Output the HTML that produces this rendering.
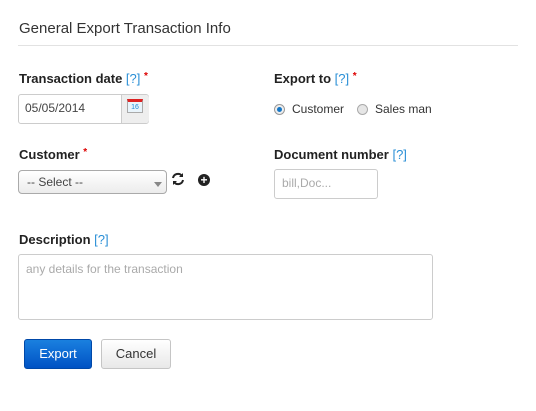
<!DOCTYPE html>
<html><head><style>
body{margin:0;width:536px;height:411px;background:#fff;font-family:"Liberation Sans",sans-serif;position:relative;overflow:hidden;color:#333}
.a{position:absolute}
.t{font-size:15px;color:#333}
.lbl{font-size:13px;font-weight:bold;color:#222}
.h{color:#2a8fd6;font-weight:normal}
.r{color:#d00;font-size:10px;vertical-align:top}
.inp{border:1px solid #ccc;border-radius:3px;background:#fff;font-size:12px;box-sizing:border-box}
.ph{color:#aaa}
</style></head><body>
<div class="a t" style="left:19px;top:20px">General Export Transaction Info</div>
<div class="a" style="left:18px;top:45px;width:500px;height:1px;background:#e2e2e2"></div>

<div class="a lbl" style="left:19px;top:71px">Transaction date <span class="h">[?]</span> <span class="r">*</span></div>
<div class="a inp" style="left:18px;top:94px;width:131px;height:30px"></div>
<div class="a" style="left:25px;top:101px;font-size:12px;color:#444">05/05/2014</div>
<div class="a" style="left:121px;top:95px;width:27px;height:28px;background:#eee;border-left:1px solid #ccc;border-radius:0 3px 3px 0"></div>
<div class="a" style="left:127px;top:99px;width:16px;height:14px;background:#e9f4fb;border:1px solid #aaa;border-top:3px solid #d22;font-size:7px;color:#1b8ad8;text-align:center;line-height:12px;box-sizing:border-box">16</div>

<div class="a lbl" style="left:274px;top:71px">Export to <span class="h">[?]</span> <span class="r">*</span></div>
<div class="a" style="left:274px;top:104px;width:11px;height:11px;border:1px solid #999;border-radius:50%;box-sizing:border-box;background:#eee"><div style="margin:2px;width:5px;height:5px;border-radius:50%;background:#1476c6"></div></div>
<div class="a" style="left:292px;top:102px;font-size:12px">Customer</div>
<div class="a" style="left:357px;top:104px;width:11px;height:11px;border:1px solid #aaa;border-radius:50%;box-sizing:border-box;background:#e6e6e6"></div>
<div class="a" style="left:375px;top:102px;font-size:12px">Sales man</div>

<div class="a lbl" style="left:19px;top:147px">Customer <span class="r">*</span></div>
<div class="a inp" style="left:18px;top:170px;width:149px;height:24px;background:linear-gradient(#fff,#ececec);border-color:#aaa;border-radius:4px"></div>
<div class="a" style="left:27px;top:175px;font-size:12px;color:#444">-- Select --</div>
<div class="a" style="left:154px;top:182px;width:0;height:0;border-left:4px solid transparent;border-right:4px solid transparent;border-top:5px solid #888"></div>
<svg class="a" style="left:171px;top:172px" width="14" height="14" viewBox="0 0 14 14"><path d="M2 6a5 5 0 0 1 9-2M12 8a5 5 0 0 1-9 2" stroke="#222" stroke-width="2" fill="none"/><path d="M12 1v4h-4zM2 13v-4h4z" fill="#222"/></svg>
<div class="a" style="left:198px;top:174px;width:12px;height:12px;border-radius:50%;background:#222;color:#fff;font-size:12px;font-weight:bold;line-height:12px;text-align:center">+</div>

<div class="a lbl" style="left:274px;top:147px">Document number <span class="h">[?]</span></div>
<div class="a inp" style="left:274px;top:169px;width:104px;height:30px"></div>
<div class="a ph" style="left:282px;top:176px;font-size:12px">bill,Doc...</div>

<div class="a lbl" style="left:19px;top:232px">Description <span class="h">[?]</span></div>
<div class="a inp" style="left:18px;top:254px;width:415px;height:66px"></div>
<div class="a ph" style="left:26px;top:262px;font-size:12px">any details for the transaction</div>

<div class="a" style="left:24px;top:339px;width:68px;height:30px;border-radius:3px;background:linear-gradient(#1a80df,#0052c4);border:1px solid #0048a8;box-sizing:border-box;color:#fff;font-size:13px;text-align:center;line-height:28px">Export</div>
<div class="a" style="left:101px;top:339px;width:70px;height:30px;border-radius:3px;background:linear-gradient(#fff,#e8e8e8);border:1px solid #c5c5c5;box-sizing:border-box;color:#333;font-size:13px;text-align:center;line-height:28px">Cancel</div>
</body></html>
